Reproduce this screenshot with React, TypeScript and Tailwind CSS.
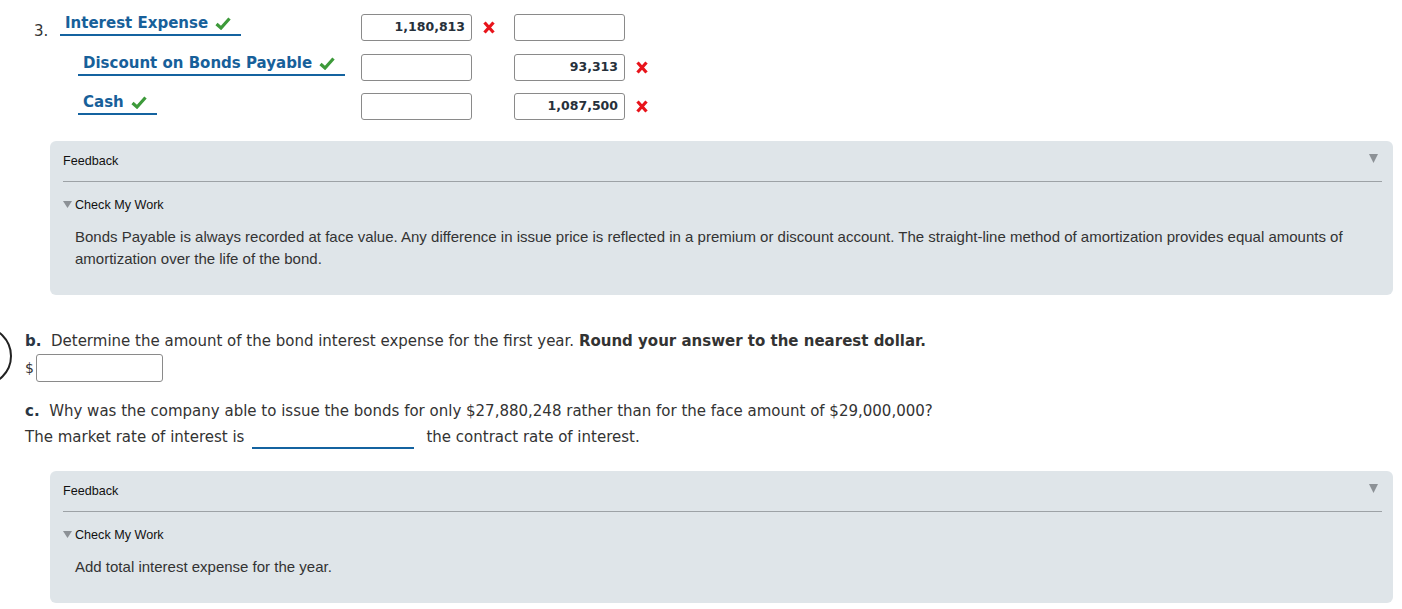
import React from 'react';

const Check = () => (
  <svg width="16" height="13" viewBox="0 0 16 13" className="ml-[7px] mt-[3px] shrink-0">
    <path d="M1.5 7 L6 11 L14.5 1.5" fill="none" stroke="#3d9a3a" strokeWidth="3.2" strokeLinejoin="miter" />
  </svg>
);

const Cross = () => (
  <svg width="12" height="13" viewBox="0 0 12 13" className="shrink-0">
    <path d="M1.5 1.5 L10.5 11.5 M10.5 1.5 L1.5 11.5" stroke="#e8141b" strokeWidth="3.2" strokeLinecap="butt" />
  </svg>
);

const Box = ({ value }: { value?: string }) => (
  <div className="w-[111px] h-[27px] shrink-0 border border-[#8a8a8a] rounded-[3px] bg-white flex items-center justify-end pr-[6px] text-[12.5px] font-bold text-[#26303a] font-['DejaVu_Sans',sans-serif]">
    {value}
  </div>
);

const Account = ({ name }: { name: string }) => (
  <div className="inline-flex items-start h-[22px] pl-[5px] pr-[10px] border-b-2 border-[#1463a0]">
    <span className="text-[15px] leading-[18px] font-bold text-[#17609a]">{name}</span>
    <Check />
  </div>
);

interface Row {
  label: string;
  indent: boolean;
  debit?: string;
  credit?: string;
  debitWrong?: boolean;
  creditWrong?: boolean;
}

const rows: Row[] = [
  { label: 'Interest Expense', indent: false, debit: '1,180,813', debitWrong: true },
  { label: 'Discount on Bonds Payable', indent: true, credit: '93,313', creditWrong: true },
  { label: 'Cash', indent: true, credit: '1,087,500', creditWrong: true },
];

const Feedback = ({ children }: { children: React.ReactNode }) => (
  <div className="ml-[50px] w-[1343px] rounded-[6px] bg-[#dfe5e9] pb-[25px] font-['Liberation_Sans',Arial,sans-serif]">
    <div className="flex items-center justify-between pl-[13px] pr-[15px] pt-[9px] h-[40px] pb-[8px]">
      <span className="text-[12.6px] text-[#111]">Feedback</span>
      <svg width="9" height="9" viewBox="0 0 9 9" className="mb-[7px]">
        <path d="M0 0 H9 L4.5 9 Z" fill="#8c9196" />
      </svg>
    </div>
    <div className="ml-[13px] mr-[11px] border-t border-[#9da2a6]" />
    <div className="pl-[13px] pt-[15px] flex items-center h-[32px]">
      <svg width="9" height="7" viewBox="0 0 9 7" className="mr-[3px] mt-[-2px]">
        <path d="M0 0 H9 L4.5 7 Z" fill="#8c9196" />
      </svg>
      <span className="text-[12.6px] text-[#111]">Check My Work</span>
    </div>
    <div className="pl-[25px] pr-[30px] pt-[12px] text-[15px] leading-[22px] text-[#333]">{children}</div>
  </div>
);

export default function App() {
  return (
    <div className="relative w-[1402px] h-[609px] overflow-hidden bg-white text-[#333] font-['DejaVu_Sans',Verdana,sans-serif]">
      <div className="absolute left-[-48px] top-[326px] w-[60px] h-[60px] rounded-full border-2 border-[#222]" />

      <div className="pt-[14px] pl-[34px] flex flex-col gap-[12.5px]">
        {rows.map((r, i) => (
          <div key={i} className="flex items-start h-[27px]">
            <div className={`w-[327px] flex items-start ${r.indent ? 'pl-[44px]' : ''}`}>
              {!r.indent && <span className="w-[26px] text-[15px] leading-[18px] mt-[8px]">3.</span>}
              <Account name={r.label} />
            </div>
            <Box value={r.debit} />
            <div className="w-[42px] pl-[11px] pt-[7px]">{r.debitWrong && <Cross />}</div>
            <Box value={r.credit} />
            <div className="w-[42px] pl-[11px] pt-[7px]">{r.creditWrong && <Cross />}</div>
          </div>
        ))}
      </div>

      <div className="mt-[21px]">
        <Feedback>
          Bonds Payable is always recorded at face value. Any difference in issue price is reflected in a premium or discount account. The straight-line method of amortization provides equal amounts of amortization over the life of the bond.
        </Feedback>
      </div>

      <div className="pl-[25px] pt-[36px] text-[15px]">
        <p className="leading-[20px]">
          <b className="text-[#2a3644]">b.</b>&nbsp; Determine the amount of the bond interest expense for the first year. <b>Round your answer to the nearest dollar.</b>
        </p>
        <div className="flex items-center mt-[3px]">
          <span className="text-[14px] w-[11px]">$</span>
          <div className="w-[127px] h-[28px] border border-[#8a8a8a] rounded-[3px] bg-white" />
        </div>
        <p className="leading-[20px] mt-[19px]">
          <b className="text-[#2a3644]">c.</b>&nbsp; Why was the company able to issue the bonds for only $27,880,248 rather than for the face amount of $29,000,000?
        </p>
        <div className="flex items-start mt-[6px]">
          <span className="leading-[20px]">The market rate of interest is</span>
          <div className="ml-[8px] w-[162px] h-[22px] border-b-2 border-[#1463a0]" />
          <span className="ml-[12px] leading-[20px]">the contract rate of interest.</span>
        </div>
      </div>

      <div className="mt-[22px]">
        <Feedback>Add total interest expense for the year.</Feedback>
      </div>
    </div>
  );
}
